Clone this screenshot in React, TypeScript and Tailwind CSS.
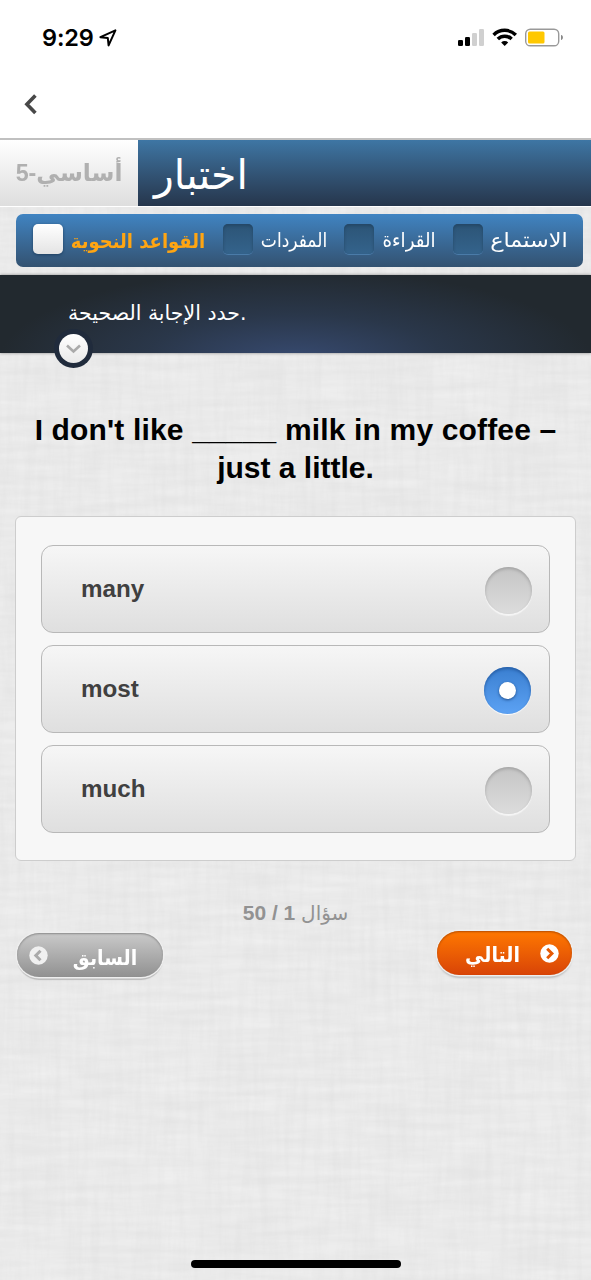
import type { ReactNode } from "react";

const AR = "font-['DejaVu_Sans','Noto_Sans',sans-serif]";

function Linen() {
  return (
    <svg className="absolute inset-0 h-full w-full" aria-hidden="true">
      <filter id="weft" x="0" y="0" width="100%" height="100%">
        <feTurbulence type="fractalNoise" baseFrequency="0.014 0.13" numOctaves="3" seed="4" />
        <feColorMatrix values="0 0 0 0 1  0 0 0 0 1  0 0 0 0 1  0.5 0 0 0 -0.11" />
      </filter>
      <filter id="warp" x="0" y="0" width="100%" height="100%">
        <feTurbulence type="fractalNoise" baseFrequency="0.13 0.014" numOctaves="3" seed="9" />
        <feColorMatrix values="0 0 0 0 0.7  0 0 0 0 0.7  0 0 0 0 0.7  0.5 0 0 0 -0.18" />
      </filter>
      <rect width="100%" height="100%" filter="url(#weft)" />
      <rect width="100%" height="100%" filter="url(#warp)" />
    </svg>
  );
}

function StatusBar() {
  return (
    <div className="flex h-[75px] items-center bg-white pl-[42px] pr-[28px]">
      <span className="w-[53px] whitespace-nowrap font-['Inter',sans-serif] text-[23.5px] font-semibold leading-none tracking-[-0.1px] text-black">9:29</span>
      <svg className="ml-[4px]" width="18" height="18" viewBox="0 0 18 18" fill="none" stroke="#000" strokeWidth="2" strokeLinejoin="round">
        <path d="M1.4 8.2 16.4 1.4 9.6 16.4 8.8 9z" />
      </svg>
      <svg className="ml-auto" width="106" height="20" viewBox="0 0 106 20">
        <rect x="1" y="12" width="5" height="6" rx="1.3" />
        <rect x="8" y="9" width="5" height="9" rx="1.3" />
        <rect x="15" y="5" width="5" height="13" rx="1.3" fill="#d0d0d0" />
        <rect x="22" y="1" width="5" height="17" rx="1.3" fill="#d0d0d0" />
        <g fill="none" stroke="#000" strokeWidth="3.5">
          <path d="M36.6 6.9a15.8 15.8 0 0 1 22.2 0" />
          <path d="M40.8 11a9.8 9.8 0 0 1 13.8 0" />
        </g>
        <path d="M44.2 14.5a5 5 0 0 1 7 0l-3.5 3.6z" />
        <rect x="68.7" y="1.2" width="33" height="16.6" rx="4.6" fill="#fff" stroke="#999" strokeWidth="1.4" />
        <rect x="71" y="3.5" width="16.5" height="12" rx="1.5" fill="#ffc800" />
        <path d="M104 7v5c1.3-.3 1.9-1.2 1.9-2.5s-.6-2.2-1.9-2.5z" fill="#888" />
      </svg>
    </div>
  );
}

function Step({ label, box, text }: { label: string; box: string; text: string }) {
  return (
    <div className="flex items-center" dir="ltr">
      <span className={`h-[30px] w-[30px] shrink-0 rounded-[5px] ${box}`} />
      <span dir="rtl" className={`${AR} flex justify-center whitespace-nowrap leading-[30px] ${text}`}>
        {label}
      </span>
    </div>
  );
}

const DARK_BOX =
  "bg-linear-to-b from-[#2c5476] to-[#34638c] shadow-[inset_0_2px_3px_#244766,0_1px_0_#4a7ba8]";

function Option({ label, selected }: { label: string; selected?: boolean }) {
  return (
    <div className="flex h-[88px] items-center justify-between rounded-[12px] border-[1.5px] border-[#b8b8b8] bg-linear-to-b from-[#f6f6f6] to-[#dfdfdf] pl-[39px]">
      <span className="text-[24.2px] font-bold leading-[30px] text-[#404040]">{label}</span>
      {selected ? (
        <span className="mr-[18px] mt-[3px] flex h-[47px] w-[47px] items-center justify-center rounded-full bg-linear-to-b from-[#3a7fd0] to-[#5ca2f4] shadow-[inset_0_2px_3px_#2860a8,0_1px_1px_#fff]">
          <span className="h-[17px] w-[17px] rounded-full bg-white shadow-[0_1px_3px_#1f4d8a]" />
        </span>
      ) : (
        <span className="mr-[17px] mt-[3px] h-[47px] w-[47px] rounded-full bg-linear-to-b from-[#c5c5c5] to-[#dcdcdc] shadow-[inset_0_2px_3px_#a6a6a6,0_2px_1px_#f5f5f5]" />
      )}
    </div>
  );
}

function Pill({ className, children }: { className: string; children: ReactNode }) {
  return (
    <button className={`flex h-[44px] items-center rounded-full text-white ${className}`}>{children}</button>
  );
}

export default function App() {
  return (
    <div className="relative h-[1280px] w-[591px] overflow-hidden bg-[#e7e7e7] font-['Liberation_Sans',Arial,sans-serif]">
      <Linen />
      <div className="relative flex h-full flex-col">
        <StatusBar />
        <div className="h-[65px] border-b-2 border-[#c0c0c0] bg-white pl-[24px] pt-[19px]">
          <svg width="13" height="21" viewBox="0 0 13 21" fill="none" stroke="#484848" strokeWidth="3.6">
            <path d="M11.4 1.5 2.9 10.3l8.5 8.8" />
          </svg>
        </div>
        <header className="flex h-[67px] border-b border-white">
          <div className="flex w-[138px] justify-center bg-linear-to-b from-white to-[#dedede] pt-[17px]">
            <span dir="rtl" className="origin-center scale-x-[0.97] whitespace-nowrap font-['Liberation_Sans','DejaVu_Sans',sans-serif] text-[24px] font-bold leading-[32px] text-[#b0b0b0]">
              أساسي-5
            </span>
          </div>
          <div className="flex-1 bg-linear-to-b from-[#3e76a4] to-[#26364c] pl-[16px] pt-[10px]">
            <h1 dir="rtl" className={`${AR} w-fit whitespace-nowrap text-[41px] leading-[50px] text-white`}>اختبار</h1>
          </div>
        </header>

        <nav className="ml-[16px] mt-[7px] flex h-[53px] w-[567px] items-center rounded-[7px] bg-linear-to-b from-[#4084c2] to-[#335271] pl-[17px] pb-[3px]">
          <div className="w-[190px]">
            <Step label="القواعد النحوية" box="bg-linear-to-b from-white to-[#e4e4e4] shadow-[0_1px_3px_#1e3f60]" text="ml-[8px] mt-[3px] w-[134px] scale-y-110 text-[18px] font-bold text-[#ffa512]" />
          </div>
          <div className="w-[121px]">
            <Step label="المفردات" box={DARK_BOX} text="ml-[7px] mt-[2px] w-[68px] scale-x-[0.9] scale-y-105 text-[19px] text-white" />
          </div>
          <div className="w-[109px]">
            <Step label="القراءة" box={DARK_BOX} text="ml-[8px] mt-[2px] w-[54px] scale-x-[0.96] scale-y-105 text-[19px] text-white" />
          </div>
          <Step label="الاستماع" box={DARK_BOX} text="ml-[7px] mt-[2px] w-[78px] scale-x-[1.12] text-[20px] text-white" />
        </nav>

        <section className="relative mt-[8px] h-[78px] bg-[#22292f] bg-[radial-gradient(ellipse_50%_115%_at_50%_108%,#374a70_0%,#2a374a_50%,#22292f_100%)] pl-[68px] pt-[23px] shadow-[0_0_3px_#888]">
          <p dir="ltr" className={`${AR} w-fit whitespace-nowrap text-[20.5px] leading-[30px] text-white`}>حدد الإجابة الصحيحة.</p>
          <button className="absolute left-[54px] top-[54px] flex h-[39px] w-[39px] items-center justify-center rounded-full bg-[#202b3c]">
            <span className="flex h-[29px] w-[29px] items-center justify-center rounded-full bg-linear-to-b from-white to-[#e9e9e9]">
              <svg width="15" height="10" viewBox="0 0 15 10" fill="none" stroke="#aaa" strokeWidth="2.6">
                <path d="m1 1.5 6.5 6 6.5-6" />
              </svg>
            </span>
          </button>
        </section>

        <h2 className="mt-[58px] whitespace-nowrap text-center text-[30px] font-bold leading-[38px] text-black">
          <span className="tracking-[0.16px]">I don't like _____ milk in my coffee –</span><br />just a little.
        </h2>

        <main className="ml-[15px] mt-[29px] flex h-[345px] w-[561px] flex-col gap-[12px] rounded-[6px] border-[1.5px] border-[#cdcdcd] bg-[#f7f7f7] px-[25px] pt-[28px]">
          <Option label="many" />
          <Option label="most" selected />
          <Option label="much" />
        </main>

        <p dir="rtl" className="mt-[37px] text-center font-['Liberation_Sans','DejaVu_Sans',sans-serif] text-[21px] leading-[30px] text-[#929292]">
          <span className="font-['DejaVu_Sans',sans-serif] text-[20px]">سؤال</span> <b>1 / 50</b>
        </p>
        <div className="mt-[3px] flex justify-between pl-[17px] pr-[19px]">
          <Pill className="mt-[2px] w-[146px] bg-linear-to-b from-[#cacaca] to-[#919191] pl-[12px] shadow-[inset_0_1px_2px_#888,0_0_0_1.5px_#eee,0_3px_1px_#bbb]">
            <svg width="19" height="19" viewBox="0 0 19 19" fill="none">
              <circle cx="9.5" cy="9.5" r="9.2" fill="#f0f0f0" />
              <path d="m11.5 4.8-4.7 4.7 4.7 4.7" stroke="#aaa" strokeWidth="3" />
            </svg>
            <span dir="rtl" className={`${AR} ml-[25px] mt-[3px] flex w-[64px] scale-y-110 justify-center whitespace-nowrap text-[19px] font-bold leading-[30px]`}>السابق</span>
          </Pill>
          <Pill className="w-[135px] bg-linear-to-b from-[#ff7800] to-[#d84307] pl-[27px] shadow-[inset_0_1px_2px_#b44b00,0_0_0_1.5px_#eee,0_3px_2px_#bbb]">
            <span dir="rtl" className={`${AR} mt-[2px] flex w-[57px] scale-y-110 justify-center whitespace-nowrap text-[19px] font-bold leading-[30px]`}>التالي</span>
            <svg className="ml-[19px]" width="19" height="19" viewBox="0 0 19 19" fill="none">
              <circle cx="9.5" cy="9.5" r="9.2" fill="#fff" />
              <path d="m7.2 4.8 4.7 4.7-4.7 4.7" stroke="#e65a05" strokeWidth="3" />
            </svg>
          </Pill>
        </div>
        <div className="mb-[12px] mt-auto h-[8px] w-[210px] self-center rounded-full bg-black" />
      </div>
    </div>
  );
}
